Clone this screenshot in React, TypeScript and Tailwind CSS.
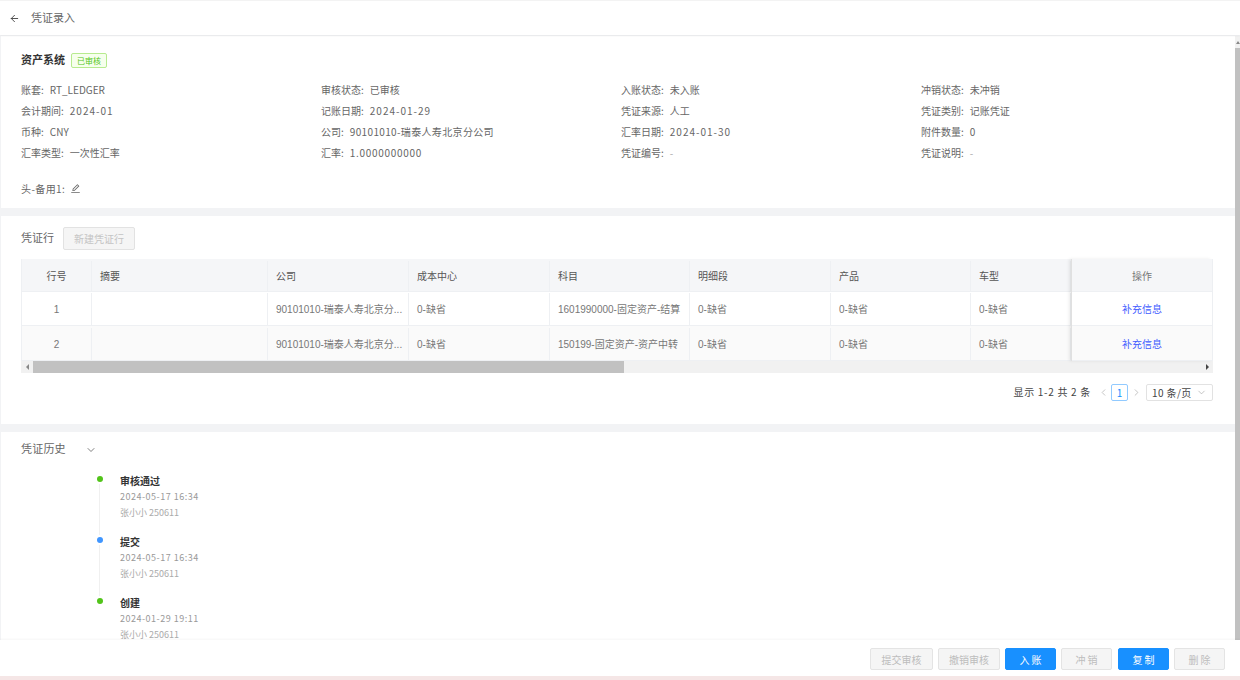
import React from 'react';
import { ArrowLeft, ChevronDown, ChevronLeft, ChevronRight } from 'lucide-react';
import { AiOutlineEdit } from 'react-icons/ai';

const fontStack = "font-['Noto_Sans_CJK_SC','Liberation_Sans',sans-serif]";
const tableFont = "font-['Liberation_Sans','Noto_Sans_CJK_SC',sans-serif]";

const infoRows = [
  [['账套', 'RT_LEDGER'], ['审核状态', '已审核'], ['入账状态', '未入账'], ['冲销状态', '未冲销']],
  [['会计期间', '2024-01'], ['记账日期', '2024-01-29'], ['凭证来源', '人工'], ['凭证类别', '记账凭证']],
  [['币种', 'CNY'], ['公司', '90101010-瑞泰人寿北京分公司'], ['汇率日期', '2024-01-30'], ['附件数量', '0']],
  [['汇率类型', '一次性汇率'], ['汇率', '1.0000000000'], ['凭证编号', '-'], ['凭证说明', '-']],
];

const lines = [
  { no: '1', account: '1601990000-固定资产-结算' },
  { no: '2', account: '150199-固定资产-资产中转' },
];

const history = [
  { title: '审核通过', time: '2024-05-17 16:34', dot: 'bg-[#52c41a]' },
  { title: '提交', time: '2024-05-17 16:34', dot: 'bg-[#4096ff]' },
  { title: '创建', time: '2024-01-29 19:11', dot: 'bg-[#52c41a]' },
];

const cell = 'shrink-0 h-full flex items-center px-[8px] border-r border-[#eef0f3] truncate';
const widths = ['w-[70px] justify-center', 'w-[176px]', 'w-[141px]', 'w-[141px]', 'w-[140px]', 'w-[141px]', 'w-[140px]', 'w-[100px]'];

// dates and numbers sit wider in the reference than the other values
const valueClass = (v: string) => {
  if (v === '-') return 'text-[#aaa]';
  if (/^\d{4}-/.test(v) && v.length <= 10) return 'tracking-[1px]';
  if (/^[\d.]+$/.test(v)) return 'tracking-[0.7px]';
  if (v.startsWith('9010')) return 'tracking-[0.35px]';
  return '';
};

const TableRow: React.FC<{ values: string[]; bg: string; height: string; color: string }> = ({ values, bg, height, color }) => (
  <div className={`flex ${height} ${bg} ${color} border-b border-[#eef0f3]`}>
    {values.map((v, i) => (
      <div key={i} className={`${cell} ${widths[i]}`}>
        {v}
      </div>
    ))}
  </div>
);

const FootButton: React.FC<{ label: string; primary?: boolean; className: string }> = ({ label, primary, className }) => (
  <div
    className={`${className} h-[22px] flex items-center justify-center rounded-[2px] text-[10px] border ${
      primary ? 'bg-[#1890ff] border-[#1890ff] text-white' : 'bg-[#f5f5f5] border-[#e4e4e4] text-[#bdbdbd]'
    }`}
  >
    {label}
  </div>
);

export default function App() {
  return (
    <div className={`${fontStack} w-[1240px] h-[680px] overflow-hidden flex flex-col bg-[#f2f3f5] text-[10px] text-[#666]`}>
      {/* Top bar */}
      <div className="h-[35px] shrink-0 flex items-center bg-white pl-[9px] gap-[11px] border-t border-[#f3f3f3] shadow-[0_1px_2px_rgba(0,0,0,0.05)] z-10">
        <ArrowLeft className="w-[11px] h-[11px] text-[#444]" strokeWidth={2} />
        <span className="text-[11px] text-[#666] pb-[2px]">凭证录入</span>
      </div>

      <div className="flex-1 min-h-0 flex pt-px">
        <div className="flex-1 min-w-0 flex flex-col pl-px">
          {/* Voucher head */}
          <div className="h-[172px] shrink-0 bg-white pl-[20px] pt-[17px]">
            <div className="flex items-center h-[15px] gap-[6px]">
              <span className="text-[11px] font-bold text-[#333] pb-[2px]">资产系统</span>
              <span className="h-[15px] px-[5px] flex items-center rounded-[2px] border border-[#b7eb8f] bg-[#f6ffed] text-[8px] text-[#52c41a]">已审核</span>
            </div>
            <div className="mt-[11px] flex flex-col">
              {infoRows.map((row, r) => (
                <div key={r} className="grid grid-cols-4 w-[1200px] h-[21px] items-center">
                  {row.map(([k, v]) => (
                    <div key={k} className="flex gap-[6px] whitespace-nowrap">
                      <span>{k}:</span>
                      <span className={valueClass(v)}>{v}</span>
                    </div>
                  ))}
                </div>
              ))}
            </div>
            <div className="mt-[18px] flex items-center gap-[5px]">
              <span className="tracking-[0.4px]">头-备用1:</span>
              <AiOutlineEdit className="w-[11px] h-[11px] text-[#666]" />
            </div>
          </div>

          {/* Voucher lines */}
          <div className="h-[208px] shrink-0 mt-[8px] bg-white pl-[20px] pt-[11px]">
            <div className="flex items-center gap-[9px] h-[23px]">
              <span className="text-[11px] pb-[2px]">凭证行</span>
              <div className="w-[72px] h-[23px] flex items-center justify-center rounded-[2px] border border-[#e2e2e2] bg-[#f5f5f5] text-[#c4c4c4]">新建凭证行</div>
            </div>
            <div className={`${tableFont} mt-[9px] w-[1192px]`}>
              <div className="flex border-x border-[#eef0f3]">
                <div className="w-[1049px] shrink-0 overflow-hidden">
                  <TableRow
                    values={['行号', '摘要', '公司', '成本中心', '科目', '明细段', '产品', '车型']}
                    bg="bg-[#f5f6f8] pt-[2px]"
                    height="h-[33px]"
                    color="text-[#555]"
                  />
                  {lines.map((l, i) => (
                    <TableRow
                      key={l.no}
                      values={[l.no, '', '90101010-瑞泰人寿北京分...', '0-缺省', l.account, '0-缺省', '0-缺省', '0-缺省']}
                      bg={i === 1 ? 'bg-[#fafafa] pt-[2px]' : 'bg-white pt-px'}
                      height={i === 1 ? 'h-[35px]' : 'h-[34px]'}
                      color="text-[#777]"
                    />
                  ))}
                </div>
                {/* Fixed action column */}
                <div className="flex-1 border-l border-[#e0e0e0] shadow-[-2px_0_3px_rgba(0,0,0,0.08)] z-10">
                  <div className="h-[33px] pt-[2px] flex items-center justify-center bg-[#f5f6f8] border-b border-[#eef0f3] text-[#777]">操作</div>
                  <div className="h-[34px] pt-px flex items-center justify-center bg-white border-b border-[#eef0f3] text-[#3f5bff]">补充信息</div>
                  <div className="h-[35px] pt-[2px] flex items-center justify-center bg-[#fafafa] border-b border-[#eef0f3] text-[#3f5bff]">补充信息</div>
                </div>
              </div>
              {/* Horizontal scrollbar */}
              <div className="h-[12px] flex items-center bg-[#f1f1f1]">
                <div className="w-[12px] flex justify-center">
                  <div className="border-y-[3px] border-y-transparent border-r-[3px] border-r-[#888]" />
                </div>
                <div className="w-[591px] h-full bg-[#c1c1c1]" />
                <div className="flex-1" />
                <div className="w-[12px] flex justify-center">
                  <div className="border-y-[3px] border-y-transparent border-l-[3px] border-l-[#444]" />
                </div>
              </div>
            </div>
            {/* Pagination */}
            <div className="mt-[11px] w-[1192px] flex items-center justify-end h-[17px] text-[#444]">
              <span className="tracking-[0.7px] pb-[2px]">显示 1-2 共 2 条</span>
              <ChevronLeft className="ml-[7px] w-[11px] h-[11px] text-[#aaa]" strokeWidth={1.5} />
              <div className="ml-[2px] w-[17px] h-[17px] flex items-center justify-center rounded-[2px] border border-[#91caff] text-[#1890ff]">1</div>
              <ChevronRight className="ml-[3px] w-[11px] h-[11px] text-[#aaa]" strokeWidth={1.5} />
              <div className="ml-[4px] w-[67px] h-[17px] flex items-center justify-between pl-[5px] pr-[5px] rounded-[2px] border border-[#e2e2e2]">
                <span className="tracking-[0.4px] pb-px">10 条/页</span>
                <ChevronDown className="w-[11px] h-[11px] text-[#aaa]" strokeWidth={1.5} />
              </div>
            </div>
          </div>

          {/* History */}
          <div className="h-[208px] shrink-0 mt-[8px] bg-white pl-[20px] overflow-hidden">
            <div className="h-[35px] flex items-center gap-[19px]">
              <span className="text-[11px] tracking-[0.2px] pb-[2px]">凭证历史</span>
              <ChevronDown className="w-[12px] h-[12px] text-[#555]" strokeWidth={1.5} />
            </div>
            <div className="pl-[75px] pt-[3px] flex flex-col">
              {history.map((h, i) => (
                <div key={i} className="flex h-[61px]">
                  <div className="w-[7px] flex flex-col items-center pt-[6px]">
                    <div className={`w-[6px] h-[6px] rounded-full shrink-0 ${h.dot}`} />
                    {i < 2 && <div className="w-px flex-1 mt-[2px] mb-[-4px] bg-[#f0f0f0]" />}
                  </div>
                  <div className="ml-[17px] flex flex-col">
                    <span className="h-[19px] pt-px flex items-center text-[#333] font-bold">{h.title}</span>
                    <span className="h-[16px] flex items-center text-[9px] text-[#999] tracking-[0.5px]">{h.time}</span>
                    <span className="h-[16px] flex items-center text-[9px] text-[#aaa]">张小小 250611</span>
                  </div>
                </div>
              ))}
            </div>
          </div>
        </div>

        {/* Page scrollbar */}
        <div className="w-[5px] shrink-0 flex flex-col bg-[#f1f1f1]">
          <div className="h-[12px] flex items-center justify-center">
            <div className="border-x-[2px] border-x-transparent border-b-[3px] border-b-[#888]" />
          </div>
          <div className="flex-1 bg-[#c1c1c1]" />
        </div>
      </div>

      {/* Footer actions */}
      <div className="h-[36px] shrink-0 bg-white flex items-center justify-end pt-[2px] pr-[15px] shadow-[0_-1px_2px_rgba(0,0,0,0.04)] z-10">
        <FootButton label="提交审核" className="w-[63px]" />
        <FootButton label="撤销审核" className="w-[62px] ml-[5px]" />
        <FootButton label="入 账" className="w-[51px] ml-[5px]" primary />
        <FootButton label="冲 销" className="w-[51px] ml-[5px]" />
        <FootButton label="复 制" className="w-[51px] ml-[6px]" primary />
        <FootButton label="删 除" className="w-[51px] ml-[5px]" />
      </div>
      <div className="h-[4px] shrink-0 bg-[#f5e6e6]" />
    </div>
  );
}
